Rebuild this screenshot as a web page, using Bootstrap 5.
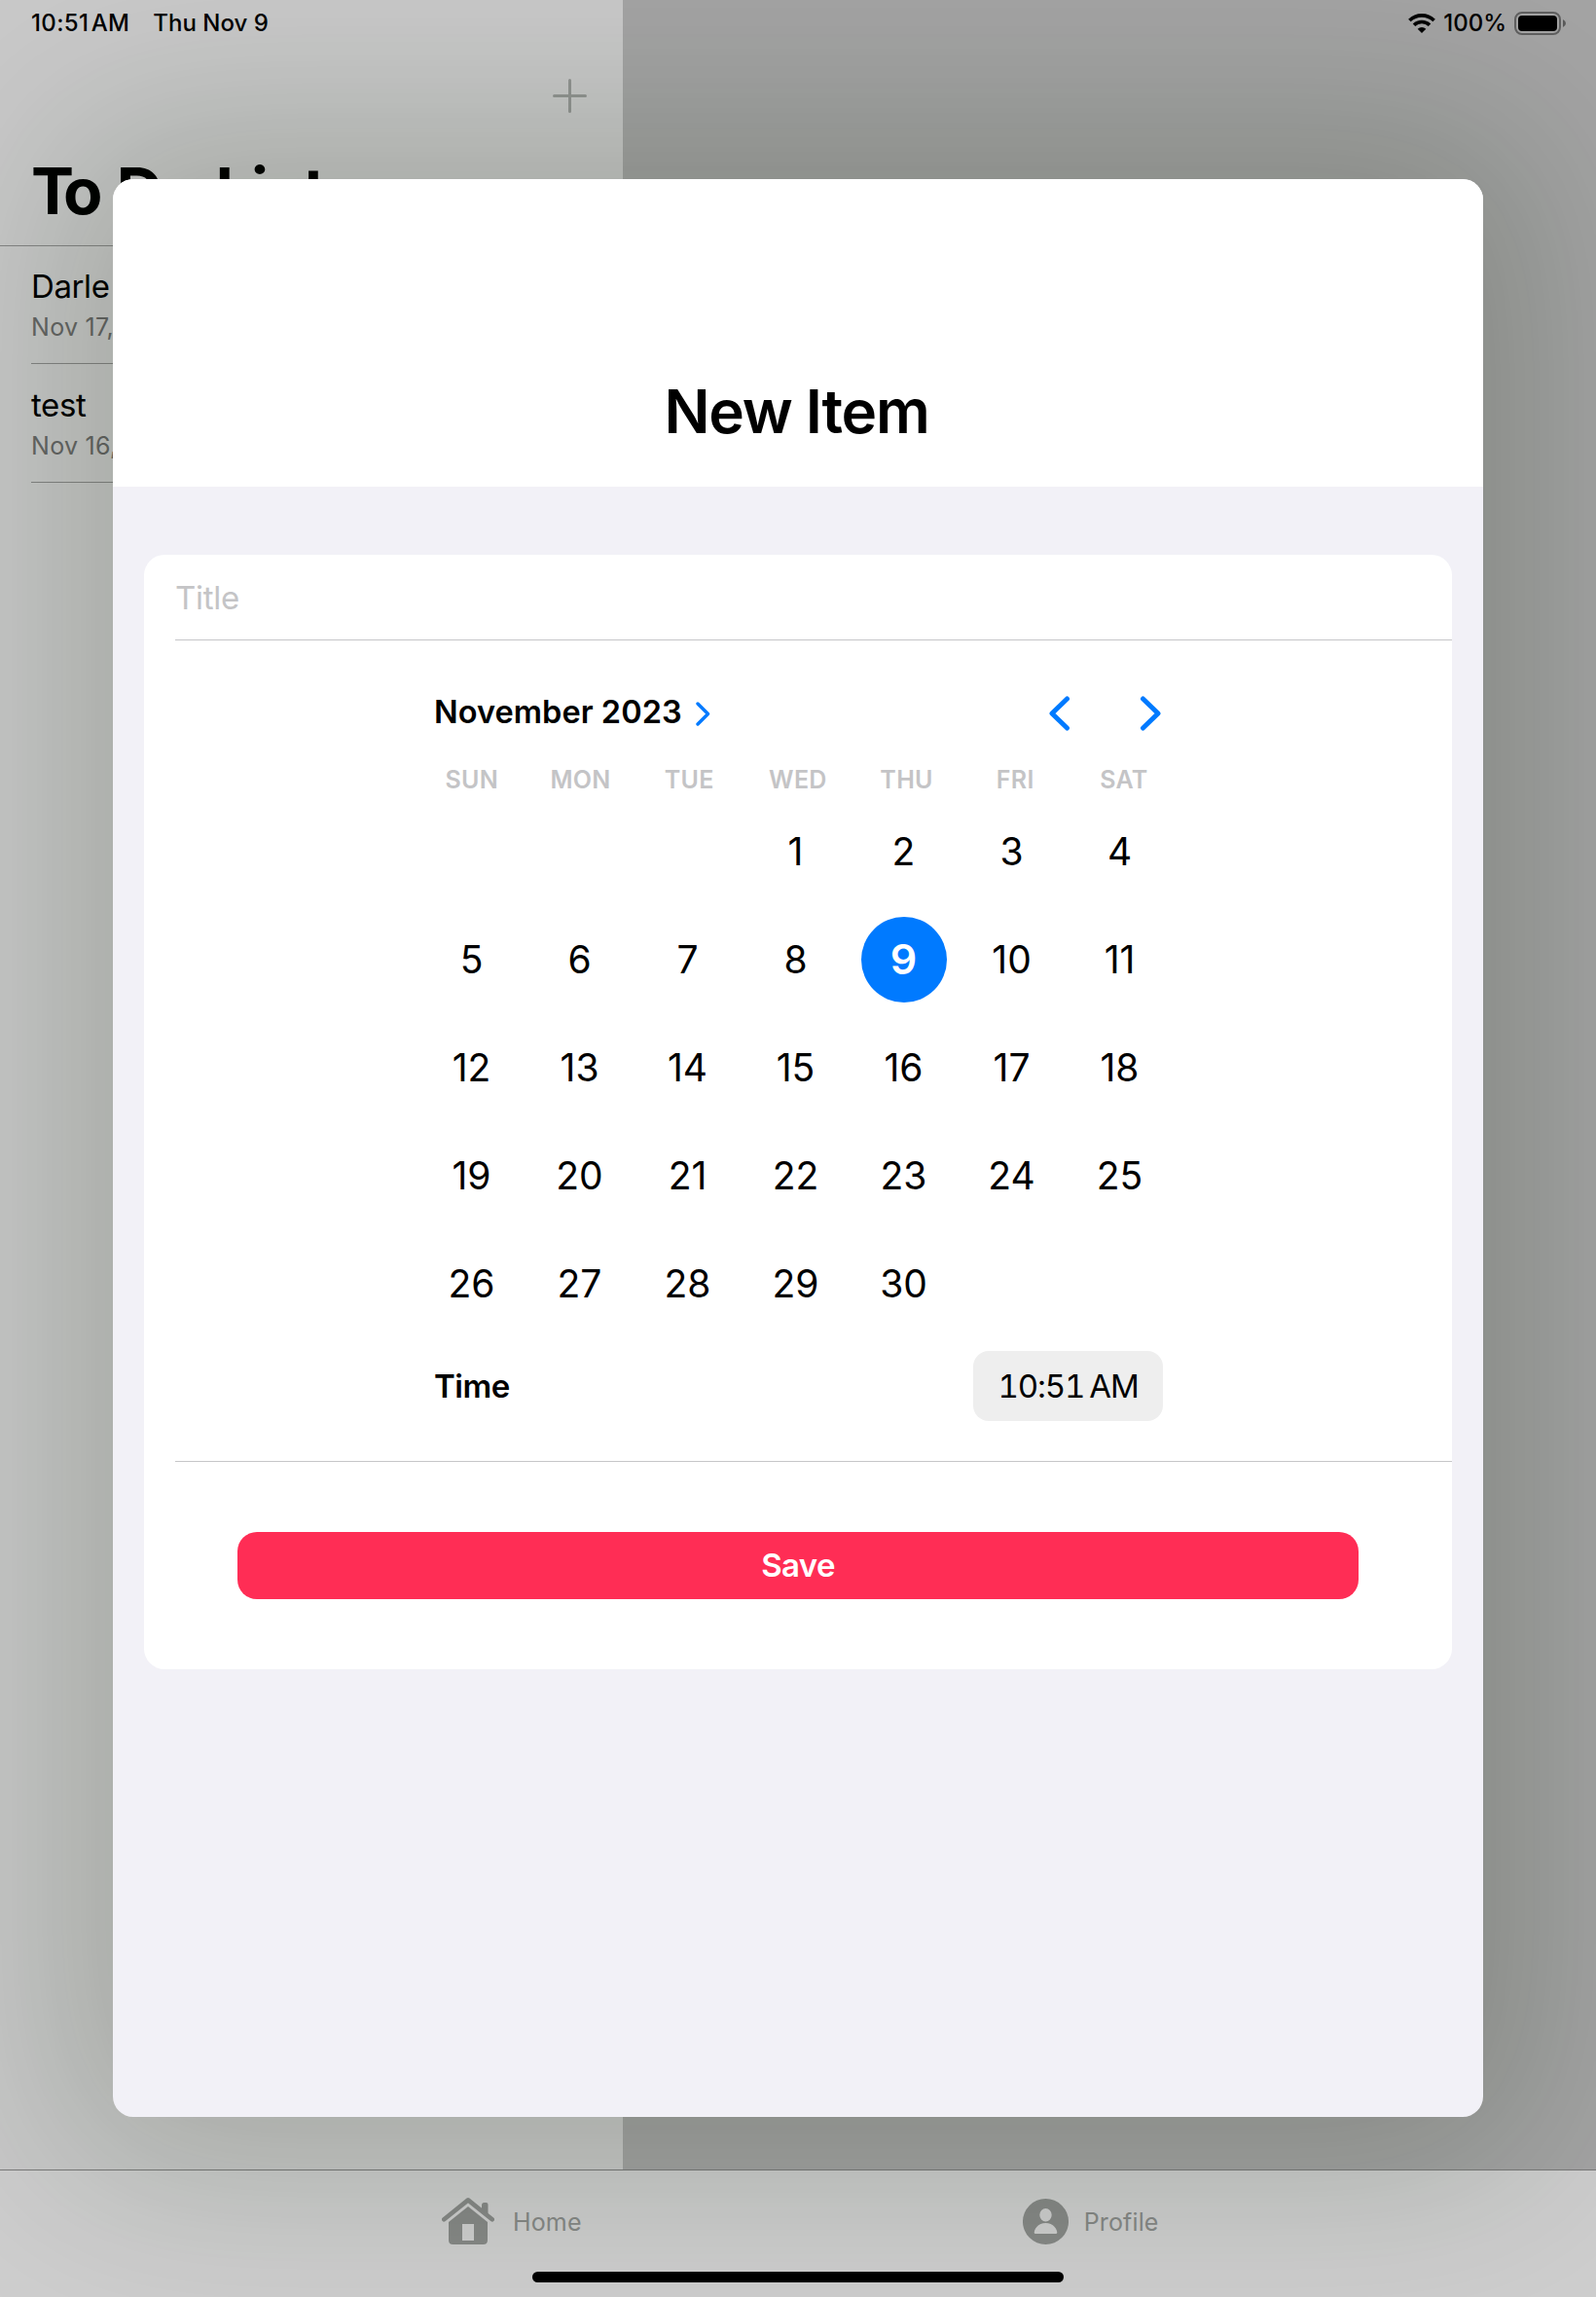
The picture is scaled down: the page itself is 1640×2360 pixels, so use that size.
<!DOCTYPE html>
<html lang="en">
<head>
<meta charset="utf-8">
<meta name="viewport" content="width=device-width, initial-scale=1">
<title>To Do List</title>
<link href="https://cdn.jsdelivr.net/npm/bootstrap@5.3.0/dist/css/bootstrap.min.css" rel="stylesheet">
<style>
  body { font-family: Inter, "Liberation Sans", sans-serif; color: #000; width: 1640px; height: 2360px; overflow: hidden; line-height: 1; background: #a4a4a4; }
  svg { display: block; flex: none; }
  .screen { width: 1640px; height: 2360px; }
  .status-bar { left: 0; top: 0; width: 1640px; height: 48px; padding: 0 30px 0 32px; z-index: 3; font-size: 24px; font-weight: 500; }
  .status-clock { letter-spacing: .35px; }
  .chip-clock { font-variant-numeric: tabular-nums; letter-spacing: -1.1px; }
  .side-pane { width: 640px; background: #c9c9c9; }
  .side-tools { height: 132px; padding: 81px 37px 0 0; }
  .side-title { font-size: 66px; font-weight: 700; height: 121px; padding: 31px 0 0 32px; letter-spacing: -.7px; }
  .kern-t { letter-spacing: -11px; }
  .side-line { border-bottom: 1px solid #858585; }
  .todo-row { margin-left: 32px; height: 122px; border-bottom: 1px solid #858585; padding-top: 25px; }
  .todo-row-first { height: 121px; padding-top: 24px; }
  .todo-name { font-size: 33px; line-height: 34px; letter-spacing: -.4px; }
  .todo-date { font-size: 25px; line-height: 26px; color: #666; margin-top: 12px; letter-spacing: .3px; }
  .tab-strip { height: 131px; border-top: 1px solid #7a7a7a; background: #cecece; color: #868886; font-size: 25px; padding-top: 25px; letter-spacing: .15px; }
  .tab-link { height: 54px; }
  .tab-link span { padding-top: 2px; }
  .tab-home { margin-left: 454px; gap: 19px; }
  .tab-profile { margin-left: 453px; gap: 16px; }
  .home-pill { left: 547px; top: 2334px; width: 546px; height: 11px; border-radius: 6px; background: #000; z-index: 3; }
  .sheet { left: 116px; top: 184px; width: 1408px; height: 1991px; border-radius: 21px; background: #f2f1f7; box-shadow: 0 0 200px 50px rgba(8,30,2,.2); z-index: 2; }
  .sheet-head { height: 316px; background: #fff; border-radius: 21px 21px 0 0; padding: 208px 3px 0 0; font-size: 62px; font-weight: 600; letter-spacing: -1.3px; }
  .form-card { margin: 70px 32px 0; height: 1145px; background: #fff; border-radius: 21px; }
  .inset-line { margin-left: 32px; border-bottom: 1px solid #c6c6c8; }
  .field-title { height: 88px; padding: 2px 0 0 0; }
  .field-title input { font-size: 33px; color: #000; letter-spacing: -.3px; }
  .field-title input::placeholder { color: #c4c4c6; opacity: 1; }
  .picker { height: 844px; padding: 43px 297px 0 266px; }
  .month-bar { height: 64px; font-size: 32.5px; font-weight: 600; padding-right: 2px; letter-spacing: .05px; }
  .month-bar span { padding-bottom: 1px; }
  .month-next { margin-left: 14px; }
  .nav-next { margin-left: 71px; }
  .day-grid { display: grid; grid-template-columns: repeat(7, 111px); grid-auto-rows: 111px; margin: 0 -17px; font-size: 39px; }
  .dow-grid { display: grid; grid-template-columns: repeat(7, 111.7px); height: 54px; padding-top: 19px; margin: 0 -17px; font-size: 25px; font-weight: 600; color: #c4c4c6; letter-spacing: .3px; }
  .picked { width: 88px; height: 88px; background: #007aff; color: #fff; font-size: 43px; font-weight: 600; }
  .time-row { height: 72px; margin-top: 14px; font-size: 33px; }
  .time-row .fw-semibold { letter-spacing: -.5px; }
  .time-chip { width: 195px; height: 72px; border-radius: 16px; background: #eee; }
  .save-wrap { padding: 72px 96px 0; }
  .btn-save { height: 69px; border-radius: 20px; background: #ff2d55; color: #fff; font-size: 33px; font-weight: 600; line-height: 1; letter-spacing: -.6px; }
</style>
</head>
<body>
<div class="screen position-relative d-flex flex-column">
  <div class="status-bar position-absolute d-flex justify-content-between align-items-center">
    <div class="d-flex"><span class="status-clock">10:51&#8202;AM</span><span class="ms-4">Thu Nov 9</span></div>
    <div class="d-flex align-items-center">
      <svg width="28" height="20" viewBox="0 0 28 20"><g fill="none" stroke="#000" stroke-width="3.6"><path d="M1.4 7A18 18 0 0 1 26.6 7"/><path d="M6 11.800A11.500 11.500 0 0 1 22 11.800"/></g><path d="M14 20l-4.300-4.200a6.200 6.200 0 0 1 8.600 0z"/></svg>
      <span class="ms-2">100%</span>
      <svg class="ms-2" width="54" height="24" viewBox="0 0 54 24"><rect x="1" y="1" width="46" height="22" rx="7" fill="none" stroke="#000" stroke-opacity=".42" stroke-width="2"/><rect x="4" y="4" width="40" height="16" rx="4"/><path d="M50 8q3 1.500 3 4t-3 4z" opacity=".45"/></svg>
    </div>
  </div>

  <div class="d-flex flex-grow-1">
    <aside class="side-pane">
      <div class="side-tools d-flex justify-content-end">
        <svg width="35" height="35" viewBox="0 0 35 35" stroke="#939593" stroke-width="3" stroke-linecap="round"><path d="M17.500 1.500v32M1.500 17.500h32"/></svg>
      </div>
      <div class="side-title side-line"><span class="kern-t">T</span>o Do List</div>
      <div class="todo-row todo-row-first"><div class="todo-name">Darle</div><div class="todo-date">Nov 17, 2023</div></div>
      <div class="todo-row"><div class="todo-name">test</div><div class="todo-date">Nov 16, 2023</div></div>
    </aside>
    <main class="flex-grow-1"></main>
  </div>

  <nav class="tab-strip d-flex">
    <a class="tab-link tab-home d-flex align-items-center text-reset text-decoration-none">
      <svg width="54" height="48" viewBox="0 0 54 48" fill="currentColor"><path d="M43.500 5h2q2 0 2 2v12L41 13.500V7.500q0-2.500 2.500-2.500z"/><path d="M2.300 22.300L27 2.400l24.700 19.900" fill="none" stroke="currentColor" stroke-width="4.600" stroke-linecap="round" stroke-linejoin="round"/><path fill-rule="evenodd" d="M27 9L47 25v18.500q0 4.500-4.500 4.500h-31Q7 48 7 43.500V25zM21 27v17h12V27z"/></svg>
      <span>Home</span>
    </a>
    <a class="tab-link tab-profile d-flex align-items-center text-reset text-decoration-none">
      <svg width="47" height="47" viewBox="0 0 47 47"><path fill="currentColor" fill-rule="evenodd" d="M23.500 0a23.500 23.500 0 1 1 0 47a23.500 23.500 0 1 1 0-47zM23.500 10a6.200 6.700 0 1 0 0 13.400a6.200 6.700 0 1 0 0-13.400zM13 36h21q1.500 0 1.300-1.500c-.8-5.500-5.800-9.500-11.800-9.500s-11 4-11.800 9.500Q11.500 36 13 36z"/></svg>
      <span>Profile</span>
    </a>
  </nav>
  <div class="home-pill position-absolute"></div>

  <section class="sheet position-absolute">
    <header class="sheet-head text-center">New Item</header>
    <div class="form-card overflow-hidden">
      <div class="field-title inset-line d-flex align-items-center"><input class="form-control-plaintext p-0" placeholder="Title" aria-label="Title"></div>
      <div class="picker inset-line">
        <div class="month-bar d-flex align-items-center">
          <span>November 2023</span>
          <svg class="month-next" width="15" height="25" viewBox="0 0 15 25" fill="none" stroke="#007aff" stroke-width="3.400" stroke-linecap="round" stroke-linejoin="round"><path d="M2 2l10.500 10.500L2 23"/></svg>
          <svg class="ms-auto" width="22" height="36" viewBox="0 0 22 36" fill="none" stroke="#007aff" stroke-width="5" stroke-linecap="round" stroke-linejoin="round"><path d="M18.500 3L3 18l15.500 15"/></svg>
          <svg class="nav-next" width="22" height="36" viewBox="0 0 22 36" fill="none" stroke="#007aff" stroke-width="5" stroke-linecap="round" stroke-linejoin="round"><path d="M3.500 3L19 18 3.500 33"/></svg>
        </div>
        <div class="dow-grid text-center align-items-center"><span>SUN</span><span>MON</span><span>TUE</span><span>WED</span><span>THU</span><span>FRI</span><span>SAT</span></div>
        <div class="day-grid text-center align-items-center">
          <span></span><span></span><span></span><span>1</span><span>2</span><span>3</span><span>4</span>
          <span>5</span><span>6</span><span>7</span><span>8</span><span class="picked rounded-circle d-flex align-items-center justify-content-center mx-auto">9</span><span>10</span><span>11</span>
          <span>12</span><span>13</span><span>14</span><span>15</span><span>16</span><span>17</span><span>18</span>
          <span>19</span><span>20</span><span>21</span><span>22</span><span>23</span><span>24</span><span>25</span>
          <span>26</span><span>27</span><span>28</span><span>29</span><span>30</span>
        </div>
        <div class="time-row d-flex align-items-center justify-content-between"><span class="fw-semibold">Time</span><span class="time-chip d-flex align-items-center justify-content-center"><span class="chip-clock">10:51&#8201;AM</span></span></div>
      </div>
      <div class="save-wrap"><button class="btn btn-save w-100 p-0" type="button">Save</button></div>
    </div>
  </section>
</div>
<script src="https://cdn.jsdelivr.net/npm/bootstrap@5.3.0/dist/js/bootstrap.bundle.min.js"></script>
</body>
</html>
